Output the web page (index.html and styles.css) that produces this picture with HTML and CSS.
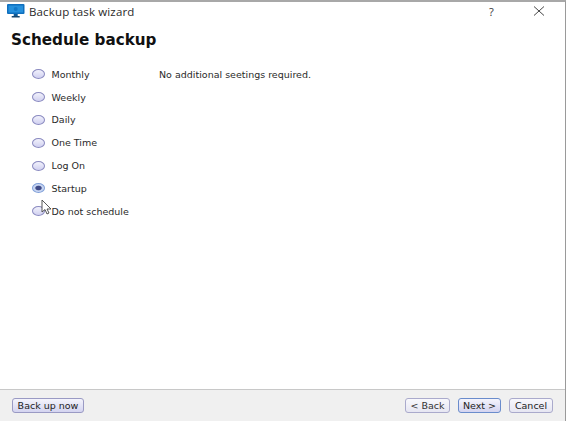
FILE: index.html
```html
<!DOCTYPE html>
<html lang="en">
<head>
<meta charset="utf-8">
<title>Backup task wizard</title>
<link rel="stylesheet" href="styles.css">
</head>
<body>
<div class="window">
  <header class="titlebar">
    <svg class="app-icon" width="18" height="14" viewBox="0 0 18 14"><rect x="0" y="0" width="17.5" height="10" rx="1" fill="#0f6fbe"/><rect x="1.5" y="1.5" width="14.5" height="7" fill="#2590dc"/><circle cx="8.7" cy="5" r="2" fill="#1478c8"/><rect x="6.7" y="10" width="4" height="2" fill="#0e5a96"/><rect x="4.7" y="12" width="8" height="1.5" fill="#16466e"/></svg>
    <span class="title">Backup task wizard</span>
    <span class="help">?</span>
    <svg class="close" width="12" height="10" viewBox="0 0 12 10"><path d="M1 0.5 L11 9.5 M11 0.5 L1 9.5" stroke="#333" stroke-width="0.9" fill="none"/></svg>
  </header>
  <h1 class="heading">Schedule backup</h1>
  <main class="content">
    <ul class="options">
      <li class="option"><span class="radio"></span><span>Monthly</span></li>
      <li class="option"><span class="radio"></span><span>Weekly</span></li>
      <li class="option"><span class="radio"></span><span>Daily</span></li>
      <li class="option"><span class="radio"></span><span>One Time</span></li>
      <li class="option"><span class="radio"></span><span>Log On</span></li>
      <li class="option"><span class="radio checked"></span><span>Startup</span></li>
      <li class="option"><span class="radio"><svg class="cursor" width="12" height="17" viewBox="0 0 12 17"><path d="M1 1 L1 13 L4 10.5 L6 15 L8 14 L6 10 L10 10 Z" fill="#fff" stroke="#444" stroke-width="0.9"/></svg></span><span>Do not schedule</span></li>
    </ul>
    <p class="note">No additional seetings required.</p>
  </main>
  <footer class="footer">
    <button class="btn">Back up now</button>
    <div class="spacer"></div>
    <button class="btn back">&lt; Back</button>
    <button class="btn next">Next &gt;</button>
    <button class="btn cancel">Cancel</button>
  </footer>
</div>
</body>
</html>
```
FILE: styles.css
```css
html, body {
  margin: 0;
  padding: 0;
  height: 100%;
}
body {
  font-family: "DejaVu Sans", sans-serif;
  color: #222;
  background: #fff;
}
.window {
  box-sizing: border-box;
  width: 566px;
  height: 421px;
  display: flex;
  flex-direction: column;
  border-top: 2px solid #a8a8a8;
  border-right: 1px solid #9a9a9a;
  background: #fff;
}
.titlebar {
  display: flex;
  align-items: center;
  height: 18px;
  padding-left: 7px;
  flex: none;
}
.app-icon {
  margin-right: 4px;
}
.title {
  font-family: "Open Sans", sans-serif;
  font-size: 11.5px;
  color: #2a2a2a;
  letter-spacing: 0.15px;
  width: 459px;
}
.help {
  font-family: "Open Sans", sans-serif;
  font-size: 11px;
  color: #333;
  width: 44px;
  padding-left: 1px;
}
.close {
  flex: none;
}
.heading {
  margin: 11px 0 0 11px;
  font-size: 15.2px;
  line-height: 18px;
  font-weight: 700;
  color: #111;
  flex: none;
}
.content {
  flex: 1;
  display: flex;
  padding: 14px 0 0 32px;
  min-height: 0;
}
.options {
  list-style: none;
  margin: 0;
  padding: 0;
  width: 127px;
  flex: none;
}
.option {
  display: flex;
  align-items: center;
  height: 22.8px;
  font-size: 9.5px;
  color: #2a2a2a;
  gap: 6.5px;
}
.radio {
  position: relative;
  box-sizing: border-box;
  width: 13px;
  height: 10px;
  border-radius: 50%;
  border: 1px solid #8a8ac0;
  background: linear-gradient(#f2f2fc, #d0d0f0);
  flex: none;
}
.radio.checked {
  border-color: #7f9fd8;
  background: radial-gradient(ellipse at center, #3f4a86 0 34%, #c4d2f0 48%, #d8e2f6 100%);
}
.cursor {
  position: absolute;
  left: 8px;
  top: -8px;
}
.note {
  margin: 6px 0 0;
  font-size: 9.5px;
  line-height: 12px;
  color: #2a2a2a;
  height: 12px;
}
.footer {
  flex: none;
  box-sizing: border-box;
  height: 32px;
  display: flex;
  align-items: center;
  padding: 0 12px 0 12px;
  background: #f0f0f0;
  border-top: 1px solid #c8c8c8;
}
.spacer {
  flex: 1;
}
.btn {
  box-sizing: border-box;
  height: 15px;
  padding: 0;
  font-family: "DejaVu Sans", sans-serif;
  font-size: 9.5px;
  line-height: 12px;
  color: #222;
  border: 1px solid #9a9ac4;
  border-radius: 3px;
  background: linear-gradient(#f4f4fc, #d4d4f0);
  width: 72px;
}
.back {
  width: 45px;
  color: #333;
  background: linear-gradient(#f8f8fc, #e6e6f2);
  border-color: #aaaacc;
}
.next {
  width: 43px;
  margin-left: 8px;
  border-color: #6a8ccc;
}
.cancel {
  width: 44px;
  margin-left: 8px;
  background: linear-gradient(#f8f8fc, #e6e6f2);
  border-color: #aaaacc;
}
```
